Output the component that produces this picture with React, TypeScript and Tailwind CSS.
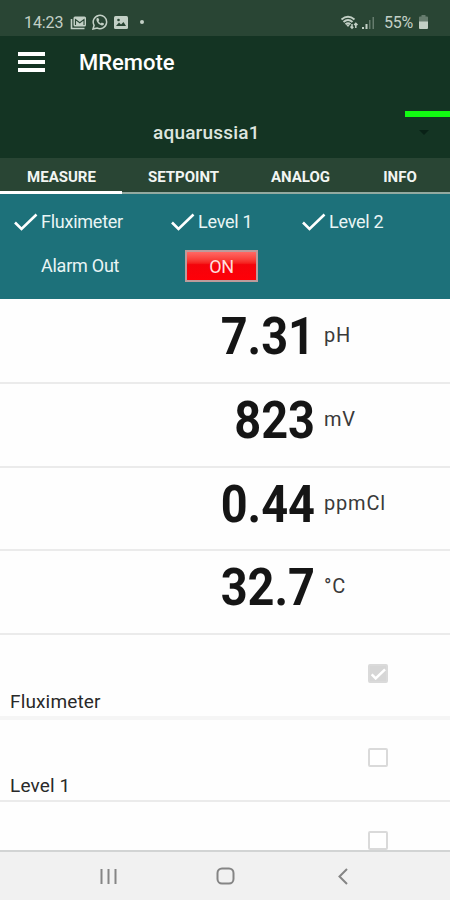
import React from 'react';

function StatusBar() {
  return (
    <div className="flex h-9 shrink-0 items-center bg-[#294534] pt-2 pl-6 text-[#c3d0c6]">
      <span className="w-[41px] pt-px text-[16px] leading-5 tracking-[-0.1px]">14:23</span>
      <svg className="ml-[5px] h-[15px] w-[17px]" viewBox="0 0 17 15" fill="none" stroke="currentColor">
        <path d="M1.5 4v9.5h13" strokeWidth="1.6" />
        <rect x="3.5" y="1.5" width="12.5" height="10" rx="1.5" fill="currentColor" stroke="none" />
        <path d="M5.500 10V4.500l4.300 3.200 4.200-3.200V10" stroke="#294534" strokeWidth="1.100" />
      </svg>
      <svg className="ml-[5px] h-[16px] w-[16px]" viewBox="0 0 16 16" fill="none" stroke="currentColor">
        <path d="M1 15l1.1-3.7A6.7 6.7 0 1 1 5 14Z" strokeWidth="1.500" />
        <path d="M4.900 4.300l1.200-.5 1.200 2.300-.8 1.100c.5 1 1.200 1.700 2.300 2.200l1-1 2.200 1.100c0 1.700-1.300 2.100-2.200 1.900C7 10.800 4.500 8 4.400 5.800c0-.7.2-1.200.5-1.500Z" fill="currentColor" stroke="none" />
      </svg>
      <svg className="ml-[6px] h-[13px] w-[14px]" viewBox="0 0 14 13">
        <rect width="14" height="13" rx="1.500" fill="currentColor" />
        <path d="M2 10l3-3.500 2 2L9.500 6 12 10Z" fill="#294534" />
        <circle cx="4.500" cy="4" r="1.300" fill="#294534" />
      </svg>
      <span className="ml-3 h-1 w-1 rounded-full bg-current" />
      <svg className="ml-[196px] h-[15px] w-[19px]" viewBox="0 0 19 15" fill="none" stroke="currentColor">
        <path d="M1.500 4.500Q8 -.8 14.500 4.500M3.500 7Q8 3 12.500 7M5.500 9.300Q8 7.200 10.500 9.300" strokeWidth="1.900" />
        <path d="M6 9.500h4L8 12Z" fill="currentColor" stroke="none" />
        <path d="M12 9v4M10.500 11.500L12 13.200l1.300-1.500M15.800 13V8.500M14.200 10l1.600-1.700 1.700 1.700" strokeWidth="1.500" />
      </svg>
      <svg className="ml-[3px] h-[13px] w-[13px]" viewBox="0 0 13 13" fill="currentColor">
        <path d="M0 11h2v2H0ZM3.500 8h2v5h-2Z" />
        <path d="M7 4h1.500v9H7ZM10.500 1H12v12h-1.500Z" opacity=".4" />
      </svg>
      <span className="ml-[9px] w-[32px] pt-px text-[16px] leading-5 tracking-[-0.2px] whitespace-nowrap">55%</span>
      <svg className="ml-[3px] h-[14px] w-[9px]" viewBox="0 0 9 14" fill="currentColor">
        <path d="M2.500 0h4v1.500H8a1 1 0 0 1 1 1V7H0V2.500a1 1 0 0 1 1-1h1.500Z" opacity=".4" />
        <path d="M0 6.500h9V13a1 1 0 0 1-1 1H1a1 1 0 0 1-1-1Z" />
      </svg>
    </div>
  );
}

function Tick({ className }: { className: string }) {
  return (
    <svg className={className} viewBox="0 0 24 18" fill="none" stroke="white" strokeWidth="2.600">
      <path d="M1 9.500L7.500 16 22.500 1.500" />
    </svg>
  );
}

function Reading({ value, unit, className }: { value: string; unit: string; className: string }) {
  return (
    <div className={`flex border-b-2 border-[#ebebeb] ${className}`}>
      <span className="w-[315px] origin-right scale-x-[0.92] pt-[7px] text-right text-[51px] leading-[60px] font-bold text-[#151515]">{value}</span>
      <span className="mt-[23px] ml-[9px] text-[20px] leading-6 tracking-[0.8px] text-[#3a3a3a]">{unit}</span>
    </div>
  );
}

function Box({ checked }: { checked?: boolean }) {
  return (
    <span className={`flex h-[19px] w-[20px] shrink-0 items-center justify-center rounded-[2px] border-2 border-[#dadada] ${checked ? 'bg-[#d6d6d6]' : 'bg-white'}`}>
      {checked && <Tick className="h-[12px] w-[15px] stroke-[4]" />}
    </span>
  );
}

export default function App() {
  return (
    <div className="flex h-[900px] w-[450px] flex-col overflow-hidden bg-white font-['Roboto','Noto_Sans',sans-serif]">
      <StatusBar />
      <header className="h-[122px] shrink-0 bg-[#143423]">
        <div className="flex h-[52px] items-center">
          <div className="ml-[18px] flex w-[27px] flex-col gap-1">
            <span className="h-[4px] bg-white" />
            <span className="h-[4px] bg-white" />
            <span className="h-[4px] bg-white" />
          </div>
          <h1 className="mt-[2px] ml-[34px] text-[22px] leading-7 font-medium text-white">MRemote</h1>
        </div>
        <div className="flex h-[70px]">
          <span className="mt-[33px] ml-[153px] w-[252px] text-[19px] leading-6 font-medium tracking-[0.2px] text-[#dde5df]">aquarussia1</span>
          <div className="flex-1 pt-[23px]">
            <div className="h-[6px] bg-[#12fb12]" />
            <svg className="mt-[13px] ml-[14px] h-[5px] w-[10px]" viewBox="0 0 10 5"><path d="M0 0h10L5 5Z" fill="#092116" /></svg>
          </div>
        </div>
      </header>
      <nav className="flex h-[36px] shrink-0 bg-[#294534] text-center text-[15px] leading-[38px] font-bold text-[#f2f5f2]">
        <span className="w-[122px] border-b-[3px] border-white pl-px">MEASURE</span>
        <span className="w-[123px] border-b-2 border-[#93aaa0]">SETPOINT</span>
        <span className="w-[111px] border-b-2 border-[#93aaa0]">ANALOG</span>
        <span className="w-[94px] border-b-2 border-[#93aaa0] pr-[6px]">INFO</span>
      </nav>
      <section className="h-[105px] shrink-0 bg-[#1d717a] pt-[16px] text-[18px] leading-6 tracking-[-0.25px] text-[#e9f5f5]">
        <div className="flex items-center whitespace-nowrap">
          <Tick className="ml-[14px] h-[18px] w-[24px]" />
          <span className="ml-[3px] w-[130px]">Fluximeter</span>
          <Tick className="h-[18px] w-[24px]" />
          <span className="ml-[3px] w-[104px]">Level 1</span>
          <Tick className="h-[18px] w-[24px]" />
          <span className="ml-[3px]">Level 2</span>
        </div>
        <div className="mt-[16px] flex items-center">
          <span className="ml-[41px] w-[144px]">Alarm Out</span>
          <button className="h-[32px] w-[73px] border-2 border-[#bd9b9b] bg-linear-to-b from-[#ff6864] via-[#f4030b] via-45% to-[#ff0008] text-[18px] leading-[29px] text-[#ffdede]">ON</button>
        </div>
      </section>
      <main className="h-[551px] shrink-0 overflow-hidden bg-[#fefefe]">
        <Reading value="7.31" unit="pH" className="h-[85px] pt-px" />
        <Reading value="823" unit="mV" className="h-[84px]" />
        <Reading value="0.44" unit="ppmCl" className="h-[83px]" />
        <Reading value="32.7" unit="°C" className="h-[84px]" />
        <div className="flex h-[85px] border-b-4 border-[#f5f5f5] pt-[29px] pl-[10px]">
          <span className="mt-[26px] w-[358px] text-[19px] leading-6 tracking-[0.15px] text-[#292929]">Fluximeter</span>
          <Box checked />
        </div>
        <div className="flex h-[82px] border-b-2 border-[#ebebeb] pt-[28px] pl-[10px]">
          <span className="mt-[26px] w-[358px] text-[19px] leading-6 tracking-[0.15px] text-[#292929]">Level 1</span>
          <Box />
        </div>
        <div className="pt-[29px] pl-[368px]"><Box /></div>
      </main>
      <footer className="h-[50px] shrink-0 border-t-2 border-[#d2d4d4] bg-[#f1f1f1]">
        <svg className="h-[48px] w-[450px]" viewBox="0 852 450 48" fill="none" stroke="#858585" strokeWidth="2">
          <path d="M101.500 869v15M108.500 869v15M115.500 869v15M347 869l-7.500 7.500 7.500 7.500" />
          <rect x="217.500" y="868.500" width="16" height="15" rx="4.500" />
        </svg>
      </footer>
    </div>
  );
}
